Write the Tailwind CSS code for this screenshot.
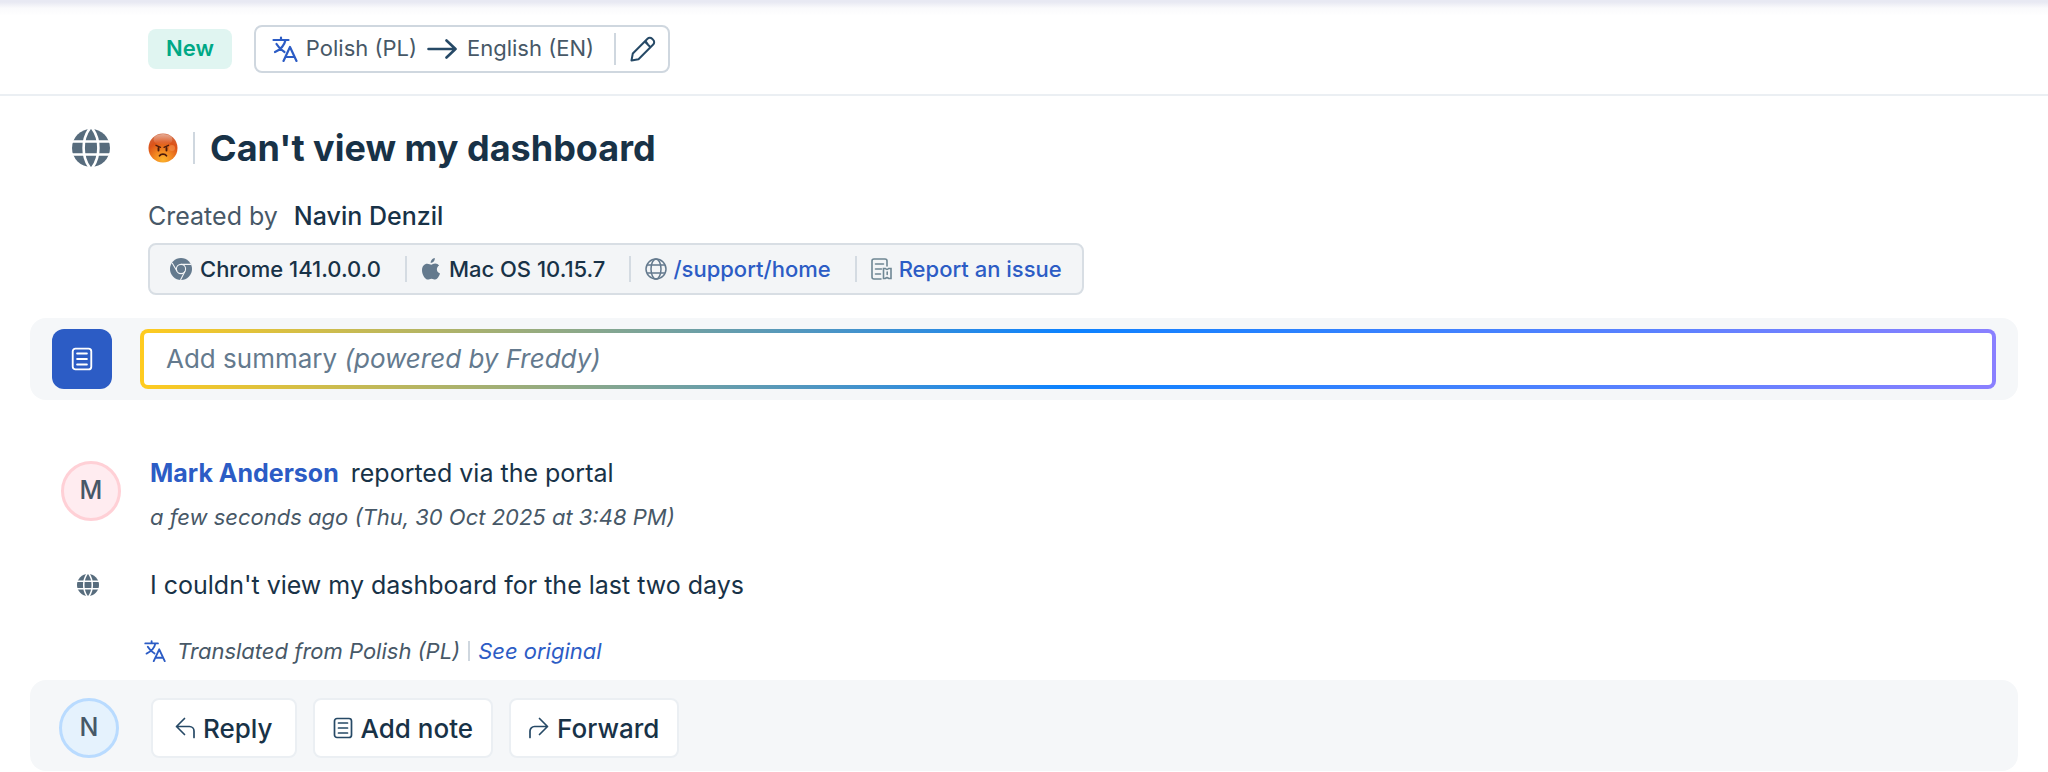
<!DOCTYPE html>
<html lang="en">

<head>
    <meta charset="UTF-8">
    <meta name="viewport" content="width=device-width, initial-scale=1.0">
    <title>Can't view my dashboard</title>
    <script src="https://cdn.jsdelivr.net/npm/@tailwindcss/browser@4"></script>
</head>

<body class="bg-white font-['Inter',sans-serif] text-[#183247]">
    <!-- shared icons -->
    <svg class="hidden">
        <symbol id="translate" viewBox="0 0 26 26">
            <g fill="none" stroke="currentColor" stroke-width="2.2" stroke-linecap="round" stroke-linejoin="round">
                <path d="M1.5 4h15M9 1.5V4M13.5 4c-1 5-5 9.500-10.500 12M4.500 8c2 3.500 4.500 6 8 8" />
                <path d="M11.500 25L18 11l6.500 14M13.500 21h9" />
            </g>
        </symbol>
        <symbol id="globe" viewBox="0 0 38 38">
            <circle cx="19" cy="19" r="19" fill="#576c7d" />
            <g fill="none" stroke="#fff" stroke-width="2.600">
                <path d="M0 12.500h38M0 25.500h38" />
                <path d="M18 -1C9.500 10 9.500 28 18 39M20 -1c8.500 11 8.500 29 0 40" />
            </g>
        </symbol>
        <symbol id="note" viewBox="0 0 20 22">
            <g fill="none" stroke="currentColor" stroke-width="1.700" stroke-linecap="round">
                <rect x="1.500" y="1.500" width="17" height="19" rx="2.500" />
                <path d="M5.500 6h9M5.500 11h9M5.500 16h9" />
            </g>
        </symbol>
    </svg>

    <header class="flex items-center gap-[22px] h-24 pt-[3px] pl-[148px] border-b-2 border-[#ebeff3] bg-[linear-gradient(#e8e9f3_2px,#fafafc_8px,#fff_16px)]">
        <span class="flex items-center h-10 px-[18px] rounded-lg bg-[#e0f5f1] text-[22px] font-semibold text-[#00a886]">New</span>
        <div class="flex items-center h-12 pl-4 pr-3 rounded-lg border-2 border-[#cfd7df] bg-white text-[22px] text-[#475867]">
            <svg class="size-[26px] mr-2 text-[#2c5cc5]"><use href="#translate" /></svg>
            <span>Polish (PL)</span>
            <svg class="w-[30px] h-5 mx-[10px]" viewBox="0 0 30 20" fill="none" stroke="#264966" stroke-width="2.600" stroke-linecap="round" stroke-linejoin="round">
                <path d="M1.500 10h27M19.500 1.500l9 8.500-9 8.500" />
            </svg>
            <span>English (EN)</span>
            <span class="w-0.5 h-8 ml-5 mr-[14px] bg-[#cfd7df]"></span>
            <button type="button" aria-label="Change languages">
                <svg class="size-[26px]" viewBox="0 0 26 26" fill="none" stroke="#264966" stroke-width="2" stroke-linejoin="round">
                    <path d="M1.500 24.500l1.300-7L17.500 2.800a3.200 3.200 0 0 1 4.600 0l1.100 1.100a3.200 3.200 0 0 1 0 4.600L8.500 23.200z" />
                    <path d="M14.800 5.500l5.700 5.700M18 8.500l-2.500-3.500" />
                </svg>
            </button>
        </div>
    </header>

    <main>
        <section class="flex items-start pt-7">
            <svg class="size-[38px] ml-[72px] mr-[38px] mt-[5px] shrink-0"><use href="#globe" /></svg>
            <div>
                <div class="flex items-center h-12">
                    <svg class="size-[30px]" viewBox="0 0 30 30">
                        <defs>
                            <radialGradient id="face" cx="50%" cy="90%" r="95%">
                                <stop offset="0" stop-color="#fcb32c" />
                                <stop offset=".3" stop-color="#f38a22" />
                                <stop offset=".65" stop-color="#dd5318" />
                                <stop offset="1" stop-color="#cf6a45" />
                            </radialGradient>
                            <linearGradient id="shine" x1="0" y1="0" x2="0" y2="1">
                                <stop offset="0" stop-color="#fff" stop-opacity=".45" />
                                <stop offset="1" stop-color="#fff" stop-opacity="0" />
                            </linearGradient>
                        </defs>
                        <circle cx="15" cy="15" r="14.500" fill="url(#face)" />
                        <ellipse cx="15" cy="6.500" rx="9.500" ry="5.500" fill="url(#shine)" />
                        <circle cx="24" cy="15" r="3" fill="#f7934f" fill-opacity=".6" />
                        <g fill="none" stroke="#4d1a0b" stroke-linecap="round">
                            <path d="M8 12.300l4.500 2M20.500 12.300l-4.500 2" stroke-width="1.300" />
                            <path d="M10.500 15v2.500M18.500 15v2.500" stroke-width="1.900" />
                            <path d="M11.500 22.800c1.500-2.200 5.500-2.200 7 0" stroke-width="1.700" />
                        </g>
                    </svg>
                    <span class="w-0.5 h-8 ml-[15px] mr-[15px] bg-[#cfd7df]"></span>
                    <h1 class="text-[36px] font-bold">Can't view my dashboard</h1>
                </div>
                <p class="flex gap-4 mt-6 mb-[7px] leading-10 text-[25px] text-[#475867]">
                    Created by <span class="font-medium text-[#183247]">Navin Denzil</span>
                </p>
                <ul class="flex items-center h-[52px] px-5 rounded-lg border-2 border-[#d8dee4] bg-[#f3f5f7] text-[22px] font-medium">
                    <li class="flex items-center gap-2 pr-6 border-r-2 border-[#d4dbe2] leading-[26px]">
                        <svg class="size-[22px]" viewBox="0 0 22 22">
                            <circle cx="11" cy="11" r="11" fill="#647a8e" />
                            <g fill="none" stroke="#f3f5f7" stroke-width="1.100">
                                <circle cx="11" cy="11" r="4.600" />
                                <path d="M11 6.400h10M7 13.300L2.200 5M15 13.300L10.500 22" />
                            </g>
                        </svg>
                        Chrome 141.0.0.0
                    </li>
                    <li class="flex items-center gap-2 pl-[14px] pr-6 border-r-2 border-[#d4dbe2] leading-[26px]">
                        <svg class="w-5 h-[22px]" viewBox="0 0 18 22" fill="#647a8e">
                            <path d="M12.800 0c.2 2.700-1.700 4.900-4.100 4.900C8.500 2.600 10.500.3 12.800 0zM9.300 6.700c.9 0 2-1.100 4-1.100 1.500 0 2.900.8 3.800 2-3.300 2-2.800 6.600.9 8-.8 2.400-2.800 6-4.800 6-1.500 0-1.800-.9-3.700-.9s-2.300.9-3.700.9C3.400 21.600 0 17 0 12.200c0-4.200 2.500-6.500 5.200-6.500 1.800 0 3.100 1 4.100 1z" />
                        </svg>
                        Mac OS 10.15.7
                    </li>
                    <li class="flex items-center gap-1.5 pl-[14px] pr-6 border-r-2 border-[#d4dbe2] leading-[26px]">
                        <svg class="size-[22px]" viewBox="0 0 22 22" fill="none" stroke="#647a8e" stroke-width="1.500">
                            <circle cx="11" cy="11" r="10" />
                            <ellipse cx="11" cy="11" rx="5" ry="10" />
                            <path d="M2 7h18M2 15h18" />
                        </svg>
                        <a href="#" class="text-[#2c5cc5]">/support/home</a>
                    </li>
                    <li class="flex items-center gap-1.5 pl-[14px] leading-[26px]">
                        <svg class="size-[22px]" viewBox="0 0 22 22" fill="none" stroke="#6f8794" stroke-width="1.600" stroke-linecap="round">
                            <path d="M10 21H3a2 2 0 0 1-2-2V3a2 2 0 0 1 2-2h11a2 2 0 0 1 2 2v5" />
                            <path d="M4.500 6h8M4.500 11h6M4.500 16h5" />
                            <path d="M12.500 10.500h1.800q1.700 1.800 3.400 0h2.300v10h-2.300q-1.700-1.800-3.400 0h-1.800zM16.200 14v2.500" />
                        </svg>
                        <a href="#" class="text-[#2c5cc5]">Report an issue</a>
                    </li>
                </ul>
            </div>
        </section>

        <section class="flex items-center gap-7 mt-[23px] mx-[30px] px-[22px] py-[11px] rounded-2xl bg-[#f5f7f9]">
            <button type="button" aria-label="Summary" class="flex items-center justify-center size-[60px] rounded-xl bg-[#2c5cc5] text-white">
                <svg class="w-[22px] h-6"><use href="#note" /></svg>
            </button>
            <button type="button" class="flex-1 p-1 rounded-lg bg-linear-to-r/srgb from-[#ffcb1f] via-[#0c82ff] to-[#8a80ff] text-left">
                <span class="block pl-[22px] leading-[52px] rounded-sm bg-white text-[26px] text-[#647a8e]">Add summary <i>(powered by Freddy)</i></span>
            </button>
        </section>

        <article class="mt-[53px]">
            <div class="flex items-start gap-[29px] pl-[61px]">
                <span class="flex items-center justify-center size-[60px] mt-2 rounded-full border-3 border-[#ffd0d6] bg-[#ffecf0] text-[25px] font-medium text-[#475867]">M</span>
                <div>
                    <p class="flex gap-3 leading-10 text-[25px]"><a href="#" class="font-bold text-[#2c5cc5]">Mark Anderson</a> reported via the portal</p>
                    <p class="mt-1 leading-10 text-[22px] italic text-[#475867]">a few seconds ago (Thu, 30 Oct 2025 at 3:48 PM)</p>
                </div>
            </div>
            <div class="flex items-center gap-[51px] mt-7 pl-[77px] leading-10 text-[25px]">
                <svg class="size-[22px]"><use href="#globe" /></svg>
                <p>I couldn't view my dashboard for the last two days</p>
            </div>
            <div class="flex items-center mt-[26px] pl-[144px] leading-10 text-[22px] italic text-[#475867]">
                <svg class="size-[22px] mr-[11px] text-[#2c5cc5]"><use href="#translate" /></svg>
                Translated from Polish (PL)
                <span class="w-0.5 h-5 mx-2 bg-[#cfd7df]"></span>
                <a href="#" class="text-[#2c5cc5]">See original</a>
            </div>
        </article>

        <footer class="flex items-center gap-4 mt-[9px] mx-[30px] pl-[29px] pt-[18px] pb-[13px] rounded-2xl bg-[#f5f7f9] text-[26px] font-medium">
            <span class="flex items-center justify-center size-[60px] mr-4 rounded-full border-3 border-[#b9dbff] bg-[#e5f2fd] text-[25px] text-[#475867]">N</span>
            <button type="button" class="flex items-center gap-2 h-[60px] px-[22px] rounded-lg border-2 border-[#ebeff3] bg-white">
                <svg class="w-5 h-[22px]" viewBox="0 0 20 22" fill="none" stroke="#264966" stroke-width="1.700" stroke-linecap="round" stroke-linejoin="round">
                    <path d="M9.500 1.500L1.500 9.500l8 8M1.500 9.500h13a4.500 4.500 0 0 1 4.500 4.500v6.500" />
                </svg>
                Reply
            </button>
            <button type="button" class="flex items-center gap-2 h-[60px] px-[18px] rounded-lg border-2 border-[#ebeff3] bg-white">
                <svg class="w-5 h-[22px] text-[#264966]"><use href="#note" /></svg>
                Add note
            </button>
            <button type="button" class="flex items-center gap-2 h-[60px] px-[18px] rounded-lg border-2 border-[#ebeff3] bg-white">
                <svg class="w-5 h-[22px]" viewBox="0 0 20 22" fill="none" stroke="#264966" stroke-width="1.700" stroke-linecap="round" stroke-linejoin="round">
                    <path d="M10.500 1.500l8 8-8 8M18.500 9.500h-13A4.500 4.500 0 0 0 1 14v6.500" />
                </svg>
                Forward
            </button>
        </footer>
    </main>
</body>

</html>
